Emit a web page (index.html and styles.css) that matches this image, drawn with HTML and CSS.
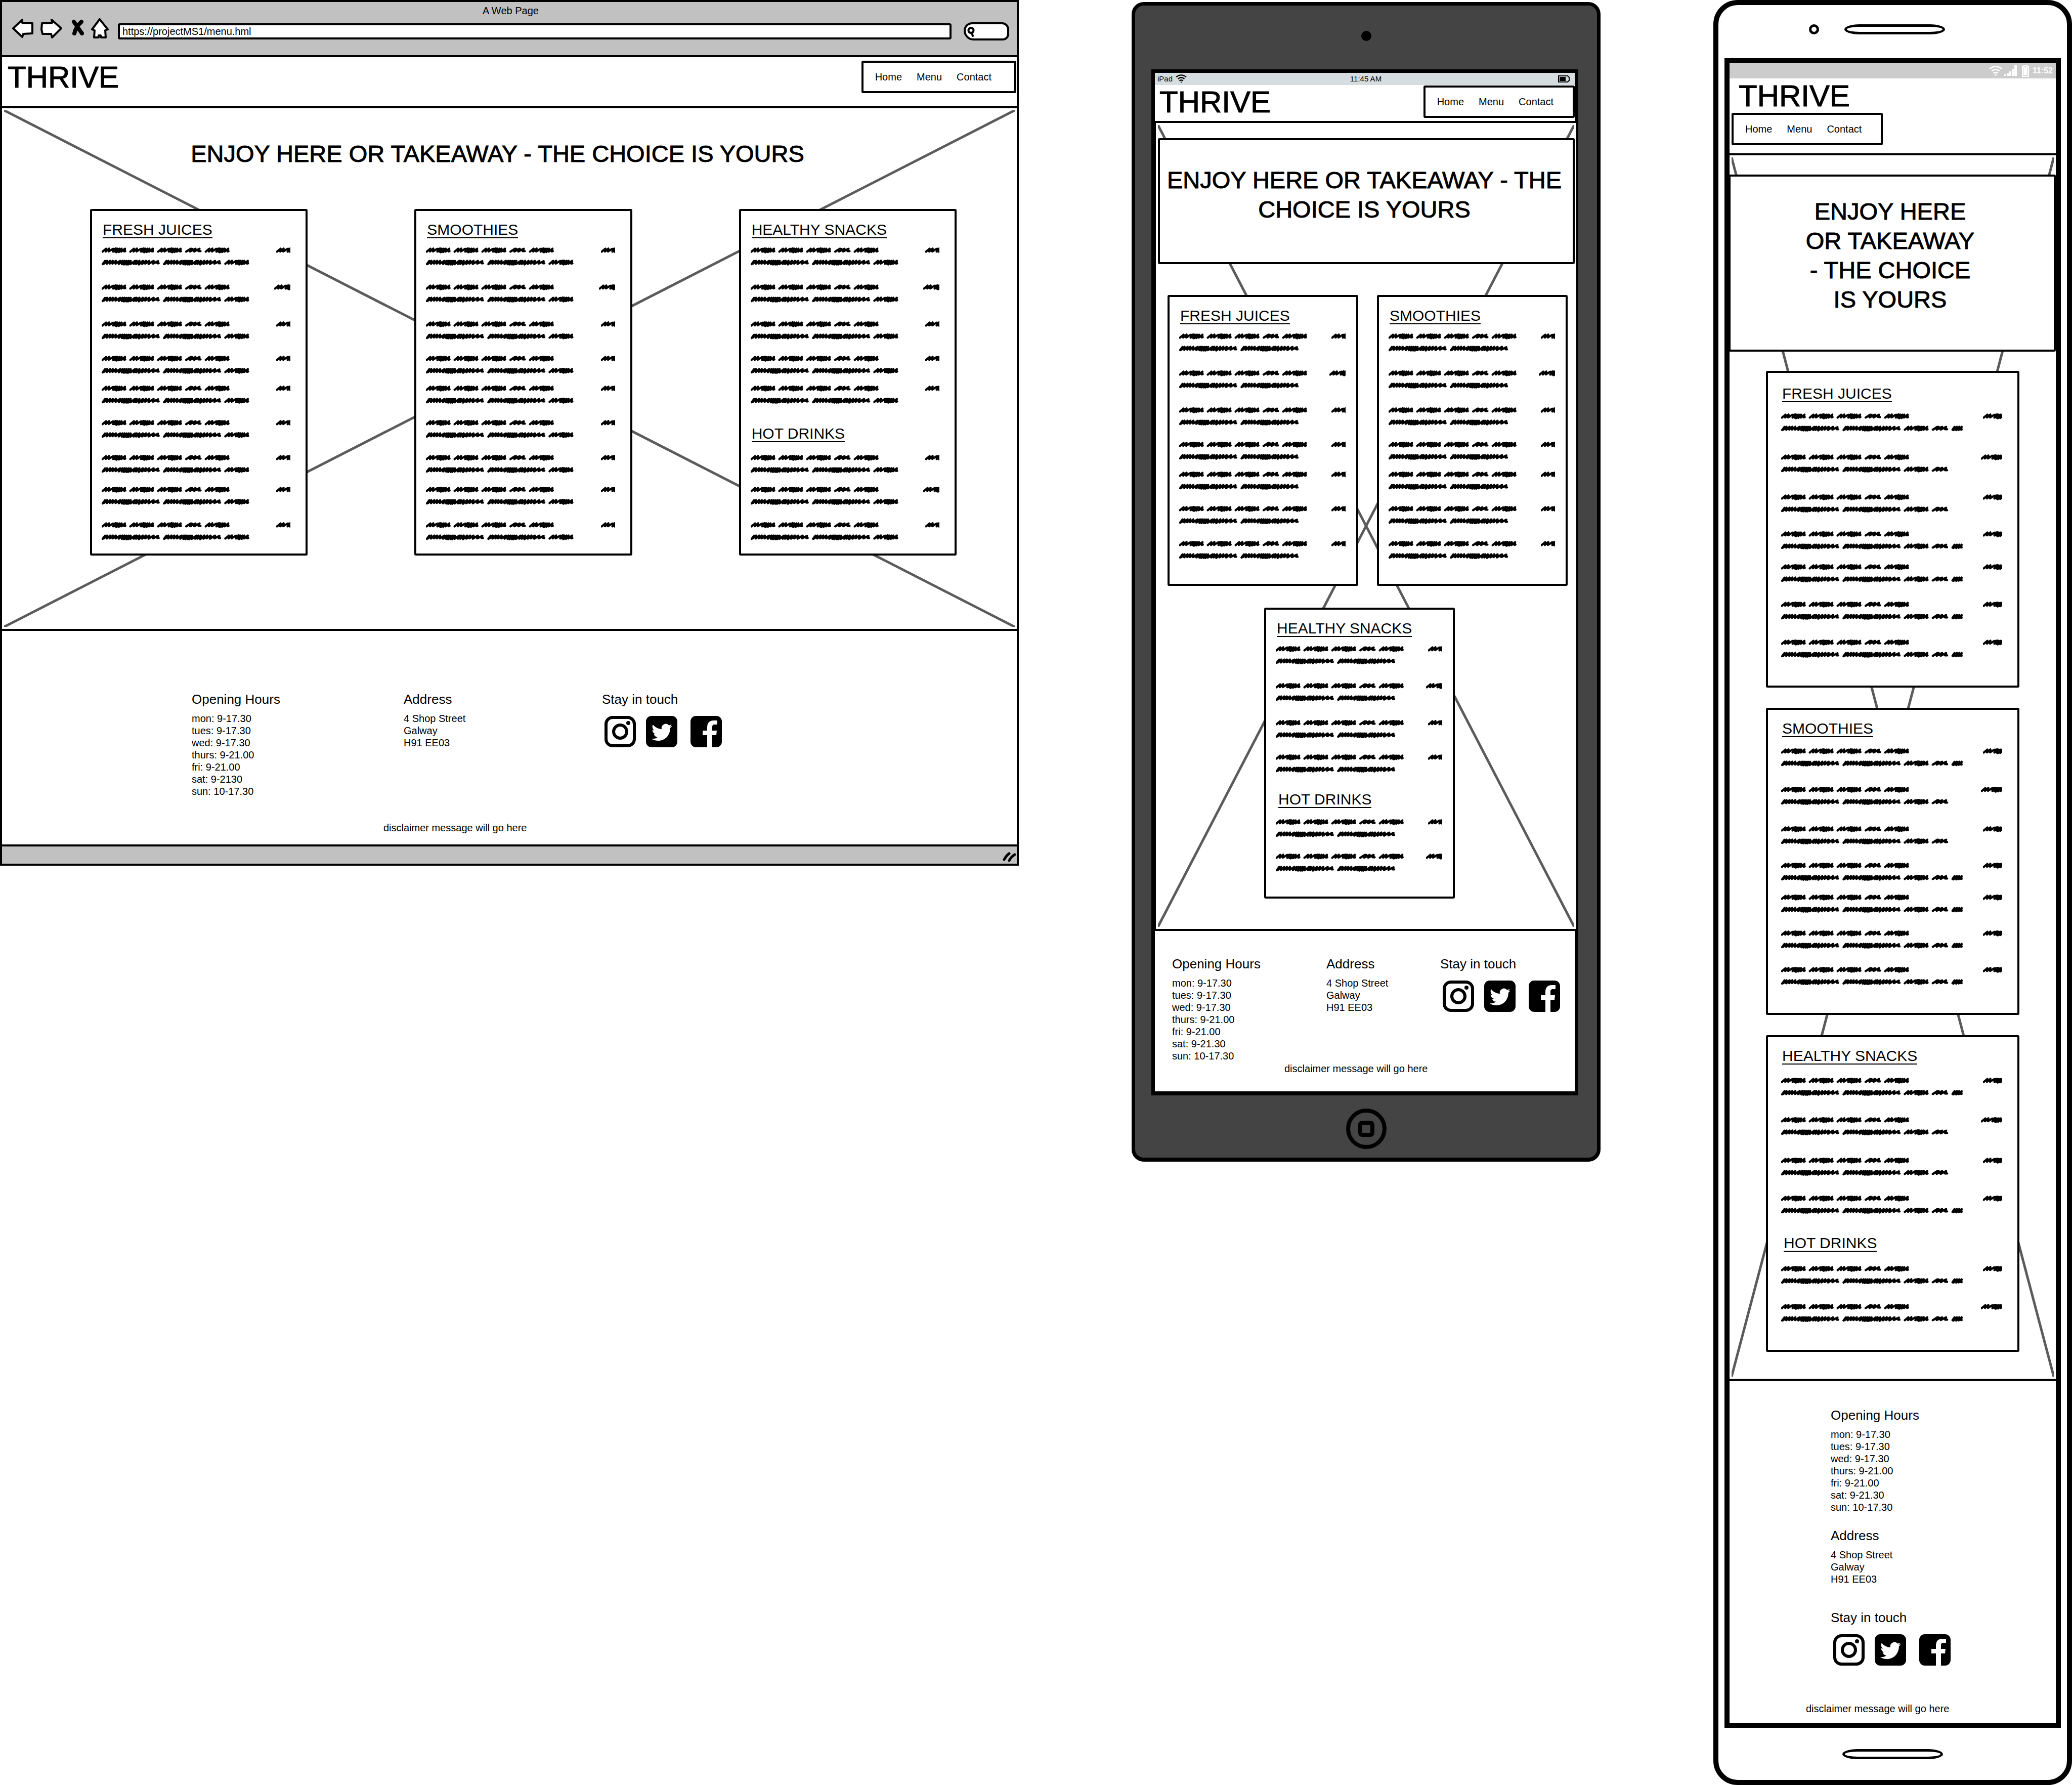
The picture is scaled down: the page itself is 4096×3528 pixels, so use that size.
FILE: index.html
```html
<!DOCTYPE html>
<html lang="en">
<head>
<meta charset="utf-8">
<title>Thrive menu wireframes</title>
<link rel="stylesheet" href="styles.css">
</head>
<body>
<svg class="defs" aria-hidden="true">
  <defs>
    <path id="word" d="M5 25L26 8 24 24 44 7 42 24 66 9 76 9 68 25 84 6 80 25 94 8 88 29 106 8 102 27 118 8 116 25 138 8 134 24 140 22"/>
    <path id="long-word" d="M6 27L20 8 14 24 32 8 30 25 50 8 48 24 66 8 64 24 84 8 82 24 110 8 102 26 124 8 120 27 136 8 132 29 148 8 146 29 160 8 156 29 172 8 170 27 198 8 190 26 208 8 204 26 224 8 220 29 244 8 240 26 262 8 258 24 282 8 278 26 308 8 304 24 334 10 330 22 338 22"/>
    <path id="short-word" d="M5 25L32 8 40 9 28 24 60 8 52 24 84 8 78 22 90 22"/>
    <path id="tiny-word" d="M6 25L18 8 12 27 32 8 28 27 46 8 42 26 60 8 56 24 60 24"/>
    <g id="name-line" transform="scale(.3335)">
      <use href="#word"/><use href="#word" x="165"/><use href="#word" x="330"/><use href="#short-word" x="496"/><use href="#word" x="612"/>
    </g>
    <g id="detail-line" transform="scale(.3335)">
      <use href="#long-word"/><use href="#long-word" x="364"/><use href="#word" x="728"/><use href="#short-word" x="894"/><use href="#tiny-word" x="1010"/>
    </g>
    <g id="instagram">
      <rect x="3" y="3" width="56" height="56" rx="13" fill="#fff" stroke="#000" stroke-width="6"/>
      <circle cx="31" cy="31" r="13" fill="none" stroke="#000" stroke-width="6"/>
      <circle cx="47" cy="14" r="4"/>
    </g>
    <g id="twitter">
      <rect width="62" height="62" rx="11"/>
      <path fill="#fff" transform="translate(11 12) scale(1.7)" d="M23.95 4.57a10 10 0 0 1-2.82.77 4.96 4.96 0 0 0 2.16-2.72c-.95.55-2 .96-3.13 1.18a4.92 4.92 0 0 0-8.38 4.48C7.69 8.09 4.07 6.13 1.64 3.16a4.82 4.82 0 0 0-.67 2.48c0 1.71.87 3.21 2.19 4.1a4.9 4.9 0 0 1-2.23-.62v.06a4.92 4.92 0 0 0 3.95 4.83 5 5 0 0 1-2.21.08 4.94 4.94 0 0 0 4.6 3.42A9.87 9.87 0 0 1 0 19.54a13.99 13.99 0 0 0 7.55 2.21c9.14 0 14.1-7.58 14.1-14.15 0-.2 0-.41-.02-.61a9.94 9.94 0 0 0 2.32-2.42z"/>
    </g>
    <g id="facebook">
      <rect width="62" height="62" rx="11"/>
      <path fill="#fff" d="M33 62V38H24V29H33V23C33 13 38 9 46 9H53V17H48C44 17 43 19 43 22V29H52L51 38H43V62z"/>
    </g>
    <g id="wifi">
      <path d="M1 6Q12-3 23 6M5 10Q12 4 19 10M8 14Q12 11 16 14" fill="none" stroke="currentColor" stroke-width="2.6"/>
      <path d="M10 16h4l-2 3z" fill="currentColor"/>
    </g>
  </defs>
</svg>

<main class="board">
  <section class="browser" aria-label="Desktop">
    <div class="chrome">
      <p class="window-title">A Web Page</p>
      <div class="toolbar">
        <button type="button" aria-label="Back"><svg width="42" height="44"><path d="M2 20L20 3 20 9 40 10 40 30 22 31 20 37z"/></svg></button>
        <button type="button" aria-label="Forward"><svg width="42" height="44"><path d="M3 10L23 9 22 3 41 20 23 38 21 31 4 31 2 22z"/></svg></button>
        <button type="button" aria-label="Stop"><svg width="30" height="44"><path class="cross" d="M10 7L26 30M25 7Q14 17 11 30"/></svg></button>
        <button type="button" aria-label="Home"><svg width="39" height="44"><path d="M17 2L33 22 28 24 29 38 20 38 19 34 15 34 15 38 6 38 7 24 2 22z"/></svg></button>
        <input class="address-bar" type="text" aria-label="Address" value="https://projectMS1/menu.hml">
        <label class="search"><svg width="18" height="28"><path d="M10 7a5 5 0 1 0 1 0zM12 17l2 6"/></svg><input type="search" aria-label="Search"></label>
      </div>
    </div>
    <header class="site-header">
      <h1 class="logo">THRIVE</h1>
      <nav class="site-nav"><a href="#">Home</a><a href="#">Menu</a><a href="#">Contact</a></nav>
    </header>
    <div class="hero">
      <svg class="cross-lines"><line x2="100%" y2="100%"/><line x1="100%" x2="0" y2="100%"/></svg>
      <h2 class="tagline">ENJOY HERE OR TAKEAWAY - THE CHOICE IS YOURS</h2>
      <div class="cards">
        <article class="card"><h3>FRESH JUICES</h3><ul class="items juices" data-rows="9"></ul></article>
        <article class="card"><h3>SMOOTHIES</h3><ul class="items smoothies" data-rows="9"></ul></article>
        <article class="card"><h3>HEALTHY SNACKS</h3><ul class="items snacks" data-rows="5"></ul><h3 class="second">HOT DRINKS</h3><ul class="items hot" data-rows="3"></ul></article>
      </div>
    </div>
    <footer class="site-footer">
      <div class="info">
        <section><h4>Opening Hours</h4><p>mon: 9-17.30<br>tues: 9-17.30<br>wed: 9-17.30<br>thurs: 9-21.00<br>fri: 9-21.00<br>sat: 9-2130<br>sun: 10-17.30</p></section>
        <section><h4>Address</h4><p>4 Shop Street<br>Galway<br>H91 EE03</p></section>
        <section><h4>Stay in touch</h4><div class="social"><a href="#" aria-label="Instagram"><svg><use href="#instagram"/></svg></a><a href="#" aria-label="Twitter"><svg><use href="#twitter"/></svg></a><a href="#" aria-label="Facebook"><svg><use href="#facebook"/></svg></a></div></section>
      </div>
      <p class="disclaimer">disclaimer message will go here</p>
    </footer>
    <div class="bottom-bar"><svg width="26" height="20"><path d="M3 15Q8 6 13 3M13 17Q17 9 24 5"/></svg></div>
  </section>

  <section class="tablet" aria-label="Tablet">
    <div class="bezel-top"><span class="lens"></span></div>
    <div class="screen">
      <div class="status"><span class="carrier">iPad <svg width="24" height="18" viewBox="0 0 26 20"><use href="#wifi"/></svg></span><span class="time">11:45 AM</span><svg class="battery" width="24" height="14"><path d="M1 1H19L22 4V10L19 13H1z" fill="none" stroke="#000" stroke-width="2"/><path d="M3 3H15V11H3z"/></svg></div>
      <header class="site-header">
        <h1 class="logo">THRIVE</h1>
        <nav class="site-nav"><a href="#">Home</a><a href="#">Menu</a><a href="#">Contact</a></nav>
      </header>
      <div class="hero">
        <svg class="cross-lines"><line x2="100%" y2="100%"/><line x1="100%" x2="0" y2="100%"/></svg>
        <div class="banner"><h2 class="tagline">ENJOY HERE OR TAKEAWAY - THE CHOICE IS YOURS</h2></div>
        <div class="cards">
          <article class="card"><h3>FRESH JUICES</h3><ul class="items juices" data-rows="7"></ul></article>
          <article class="card"><h3>SMOOTHIES</h3><ul class="items smoothies" data-rows="7"></ul></article>
        </div>
        <div class="cards lower">
          <article class="card"><h3>HEALTHY SNACKS</h3><ul class="items snacks" data-rows="4"></ul><h3 class="second">HOT DRINKS</h3><ul class="items hot" data-rows="2"></ul></article>
        </div>
      </div>
      <footer class="site-footer">
        <div class="info">
          <section><h4>Opening Hours</h4><p>mon: 9-17.30<br>tues: 9-17.30<br>wed: 9-17.30<br>thurs: 9-21.00<br>fri: 9-21.00<br>sat: 9-21.30<br>sun: 10-17.30</p></section>
          <section><h4>Address</h4><p>4 Shop Street<br>Galway<br>H91 EE03</p></section>
          <section><h4>Stay in touch</h4><div class="social"><a href="#" aria-label="Instagram"><svg><use href="#instagram"/></svg></a><a href="#" aria-label="Twitter"><svg><use href="#twitter"/></svg></a><a href="#" aria-label="Facebook"><svg><use href="#facebook"/></svg></a></div></section>
        </div>
        <p class="disclaimer">disclaimer message will go here</p>
      </footer>
    </div>
    <div class="bezel-bottom"><button type="button" class="home-button" aria-label="Home button"><span></span></button></div>
  </section>

  <section class="phone" aria-label="Phone">
    <div class="bezel-top"><span class="lens"></span><span class="speaker"></span></div>
    <div class="screen">
      <div class="status">
        <svg width="26" height="22" viewBox="0 0 24 19"><use href="#wifi"/></svg>
        <svg width="26" height="22"><path d="M0 18h4v3H0zM5 16h4v5H5zM10 12h4v9h-4zM15 7h4v14h-4zM20 0h5v21h-5z" fill="#fff"/></svg>
        <svg class="battery" width="14" height="24"><path d="M1 3H4V1H10V3H13V23H1z" fill="none" stroke="#fff" stroke-width="2"/><path d="M3 5H11V21H3z" fill="#fff"/></svg>
        <span>11:52</span>
      </div>
      <header class="site-header">
        <h1 class="logo">THRIVE</h1>
        <nav class="site-nav"><a href="#">Home</a><a href="#">Menu</a><a href="#">Contact</a></nav>
      </header>
      <div class="hero">
        <svg class="cross-lines"><line x2="100%" y2="100%"/><line x1="100%" x2="0" y2="100%"/></svg>
        <div class="banner"><h2 class="tagline">ENJOY HERE OR TAKEAWAY - THE CHOICE IS YOURS</h2></div>
        <div class="cards">
          <article class="card first"><h3>FRESH JUICES</h3><ul class="items juices" data-rows="7"></ul></article>
          <article class="card"><h3>SMOOTHIES</h3><ul class="items smoothies" data-rows="7"></ul></article>
          <article class="card"><h3>HEALTHY SNACKS</h3><ul class="items snacks" data-rows="4"></ul><h3 class="second">HOT DRINKS</h3><ul class="items hot" data-rows="2"></ul></article>
        </div>
      </div>
      <footer class="site-footer">
        <div class="info">
          <section><h4>Opening Hours</h4><p>mon: 9-17.30<br>tues: 9-17.30<br>wed: 9-17.30<br>thurs: 9-21.00<br>fri: 9-21.00<br>sat: 9-21.30<br>sun: 10-17.30</p></section>
          <section><h4>Address</h4><p>4 Shop Street<br>Galway<br>H91 EE03</p></section>
          <section class="touch"><h4>Stay in touch</h4><div class="social"><a href="#" aria-label="Instagram"><svg><use href="#instagram"/></svg></a><a href="#" aria-label="Twitter"><svg><use href="#twitter"/></svg></a><a href="#" aria-label="Facebook"><svg><use href="#facebook"/></svg></a></div></section>
        </div>
        <p class="disclaimer">disclaimer message will go here</p>
      </footer>
    </div>
    <div class="bezel-bottom"><span class="speaker"></span></div>
  </section>
</main>
<script src="menu.js"></script>
</body>
</html>
```
FILE: menu.js
```js
// Each placeholder dish is a scribbled name, a price and a line of detail.
const dish = `<li>
  <svg class="scribble name"><use href="#name-line"/></svg>
  <svg class="scribble price"><use href="#name-line"/></svg>
  <svg class="scribble detail"><use href="#detail-line"/></svg>
</li>`;

document.querySelectorAll('.items').forEach((list) => {
  list.innerHTML = dish.repeat(Number(list.dataset.rows));
});
```
FILE: styles.css
```css
* { box-sizing: border-box; }

body {
  margin: 0;
  background: #fff;
  color: #000;
  font: 20px/24px "Liberation Sans", Arial, sans-serif;
}

h1, h2, h3, h4, p, ul { margin: 0; padding: 0; font-weight: 400; }
a { color: inherit; text-decoration: none; }
svg { display: block; }
button { padding: 0; border: 0; background: none; }
.defs { position: absolute; width: 0; height: 0; }

.board {
  display: grid;
  grid-template-columns: 2014fr 927fr 709fr;
  column-gap: 223px;
  align-items: start;
}

/* Shared site parts */
.logo {
  padding-top: 2px;
  font-size: 60px;
  line-height: 60px;
  -webkit-text-stroke: 1px #000;
}
.site-header { display: flex; align-items: center; justify-content: space-between; }
.site-nav {
  display: flex;
  align-items: center;
  gap: 29px;
  height: 64px;
  padding: 0 38px 0 23px;
  border: 4px solid #000;
  border-radius: 3px;
  background: #fff;
}
.hero { position: relative; border: 4px solid #000; background: #fff; }
.cross-lines {
  position: absolute;
  top: 4px;
  left: 4px;
  width: calc(100% - 8px);
  height: calc(100% - 8px);
  stroke: #5b5b5b;
  stroke-width: 5px;
}
.tagline {
  position: relative;
  font-size: 47px;
  line-height: 58px;
  text-align: center;
  -webkit-text-stroke: 1px #000;
}
.banner { position: relative; border: 4px solid #000; border-radius: 3px; background: #fff; }
.cards { position: relative; display: grid; }
.card {
  padding: 22px 30px 27px 19px;
  border: 4px solid #000;
  border-radius: 3px;
  background: #fff;
}
.card h3 {
  width: max-content;
  margin-left: 2px;
  border-bottom: 2px solid #000;
  font-size: 30px;
  line-height: 30px;
}
.items { display: grid; margin-top: 18px; list-style: none; }
.items li {
  display: grid;
  grid-template-columns: 1fr auto;
  grid-template-rows: 12px 12px;
  row-gap: 12px;
}
.scribble {
  height: 12px;
  overflow: hidden;
  fill: none;
  stroke: #000;
  stroke-width: 13px;
  stroke-linecap: round;
  stroke-linejoin: round;
}
.name { width: 254px; }
.price { width: 28px; }
.items li:nth-child(2) .price { width: 32px; }
.detail { grid-column: 1 / -1; width: 292px; }

.info { display: grid; }
.info h4 { margin-bottom: 11px; font-size: 26px; line-height: 30px; }
.social { display: flex; gap: 20px; padding: 7px 0 0 5px; }
.social a:last-child { margin-left: 6px; }
.social svg { width: 62px; height: 62px; }

/* Desktop browser */
.browser { border: 4px solid #000; }
.chrome { padding: 5px 15px 29px 20px; border-bottom: 4px solid #000; background: #c1c1c1; }
.window-title { margin-bottom: 3px; text-align: center; }
.toolbar { display: flex; align-items: flex-end; gap: 14px; }
.toolbar button svg { fill: #fff; stroke: #000; stroke-width: 4px; stroke-linejoin: round; }
.toolbar button .cross { fill: none; stroke-width: 8px; stroke-linecap: round; }
.address-bar {
  flex: 1;
  height: 32px;
  margin-bottom: 2px;
  padding: 0 5px;
  border: 4px solid #000;
  border-radius: 4px;
  background: #fff;
  color: #000;
  font: inherit;
}
.search {
  display: flex;
  width: 90px;
  height: 36px;
  margin-left: 10px;
  border: 4px solid #000;
  border-radius: 24px 20px 18px 28px;
  background: #fff;
}
.search svg { flex: none; fill: none; stroke: #000; stroke-width: 4px; stroke-linecap: round; }
.search input { width: 50px; border: 0; background: none; outline: 0; }
.browser .site-header { padding: 7px 1px 26px 11px; }
.browser .site-nav { padding-right: 45px; }
.browser .hero { padding: 61px 119px 145px 174px; border-width: 4px 0; }
.browser .tagline { margin-bottom: 80px; padding-right: 102px; }
.browser .cards { grid-template-columns: repeat(3, 1fr); column-gap: 211px; }
.browser .items { grid-template-rows: 73px 73px 68px 59px 68px 69px 63px 70px 35px; }
.browser .snacks { grid-template-rows: 73px 73px 68px 59px 35px; }
.browser .hot { grid-template-rows: 63px 70px 35px; margin-top: 25px; }
.browser .second { margin-top: 45px; }
.browser .site-footer { padding: 120px 0 21px 375px; }
.browser .info { grid-template-columns: 419px 392px 1fr; }
.browser .disclaimer { margin: 48px 0 0 379px; }
.bottom-bar {
  display: flex;
  justify-content: flex-end;
  padding: 11px 2px 3px;
  border-top: 4px solid #000;
  background: #c1c1c1;
}
.bottom-bar svg { fill: none; stroke: #000; stroke-width: 5px; stroke-linecap: round; }

/* Tablet */
.tablet {
  margin-top: 4px;
  padding: 0 37px 0 32px;
  border: 7px solid #000;
  border-bottom-width: 8px;
  border-radius: 24px;
  background: #444;
}
.tablet .bezel-top { display: flex; justify-content: center; height: 126px; padding: 50px 0 0 5px; }
.tablet .lens { width: 20px; height: 20px; border-radius: 50%; background: #000; }
.tablet .screen { border: 7px solid #000; border-bottom-width: 8px; background: #fff; }
.tablet .status {
  display: grid;
  grid-template-columns: 1fr auto 1fr;
  align-items: center;
  height: 24px;
  padding: 0 9px 0 5px;
  background: #d6dde0;
  font-size: 15px;
}
.carrier { display: flex; gap: 6px; align-items: center; }
.time { margin-left: 8px; }
.tablet .battery { justify-self: end; }
.tablet .site-header { padding: 1px 0 6px 9px; }
.tablet .hero { margin: 0 -7px 0 -2px; padding: 30px 3px 60px 4px; }
.tablet .banner { padding: 50px 0 75px; }
.tablet .tagline { margin: 0 8px 0 0; }
.tablet .cards { grid-template-columns: 1fr 1fr; column-gap: 37px; margin: 61px 14px 0 19px; }
.tablet .lower { margin: 43px 237px 0 210px; grid-template-columns: 1fr; }
.tablet .card { padding: 22px 21px 50px 19px; }
.tablet .items { grid-template-rows: 73px 73px 68px 59px 68px 69px 35px; }
.tablet .snacks { grid-template-rows: 73px 73px 68px 35px; }
.tablet .hot { grid-template-rows: 68px 35px; margin-top: 22px; }
.tablet .second { margin: 39px 0 0 5px; }
.tablet .detail { width: 238px; }
.tablet .site-footer { padding: 50px 0 33px 34px; }
.tablet .info { grid-template-columns: 305px 225px 1fr; }
.tablet .disclaimer { margin: 1px 0 0 222px; }
.tablet .bezel-bottom { display: flex; justify-content: center; height: 123px; padding: 26px 0 0 5px; }
.home-button {
  display: grid;
  place-items: center;
  width: 80px;
  height: 80px;
  border: 8px solid #000;
  border-radius: 50%;
}
.home-button span { width: 32px; height: 32px; border: 8px solid #000; border-radius: 8px; }

/* Phone */
.phone {
  padding: 0 12px;
  border: 10px solid #000;
  border-radius: 48px;
  background: #fff;
}
.phone .bezel-top { display: flex; align-items: center; height: 105px; padding: 0 0 9px 167px; gap: 50px; }
.phone .lens { width: 20px; height: 20px; border: 5px solid #000; border-radius: 50%; }
.phone .speaker { width: 199px; height: 20px; border: 5px solid #000; border-radius: 30px / 10px; }
.phone .screen { border: 10px solid #000; }
.phone .status {
  display: flex;
  align-items: center;
  justify-content: flex-end;
  gap: 4px;
  height: 30px;
  padding-right: 6px;
  background: #ccc;
  color: #fff;
  font-size: 16px;
  font-weight: 700;
}
.phone .battery { margin: 0 3px 0 5px; }
.phone .site-header { display: block; padding: 3px 0 16px 4px; }
.phone .logo { margin-bottom: 3px; padding-left: 14px; }
.phone .site-nav { width: max-content; }
.phone .hero { margin: 0 -4px; padding: 38px 0 53px; }
.phone .banner { margin-left: -2px; padding: 40px 8px 70px 0; }
.phone .tagline { max-width: 350px; margin: 0 auto; }
.phone .cards { row-gap: 40px; margin: 38px 72px 0; }
.phone .card { padding: 22px 30px 56px 26px; }
.phone .first { padding-top: 26px; }
.phone .juices { grid-template-rows: 81px 79px 73px 65px 74px 75px 35px; }
.phone .smoothies { grid-template-rows: 76px 78px 72px 63px 71px 72px 35px; }
.phone .items { margin-top: 22px; }
.phone .snacks { grid-template-rows: 78px 80px 75px 35px; margin-top: 26px; }
.phone .hot { grid-template-rows: 75px 35px; margin-top: 28px; }
.phone .second { margin: 44px 0 0 5px; }
.phone .price { width: 38px; }
.phone .items li:nth-child(2) .price { width: 42px; }
.phone .detail { width: 360px; }
.phone .juices li:nth-child(2) .detail,
.phone .juices li:nth-child(3) .detail,
.phone .smoothies li:nth-child(2) .detail,
.phone .smoothies li:nth-child(3) .detail,
.phone .snacks li:nth-child(2) .detail,
.phone .snacks li:nth-child(3) .detail { width: 332px; }
.phone .site-footer { padding: 53px 0 16px 151px; }
.phone .info { padding-left: 49px; }
.phone .info section + section { margin-top: 29px; }
.phone .info .touch.touch { margin-top: 49px; }
.phone .disclaimer { margin-top: 73px; }
.phone .bezel-bottom { display: flex; justify-content: center; align-items: center; height: 103px; }
```
